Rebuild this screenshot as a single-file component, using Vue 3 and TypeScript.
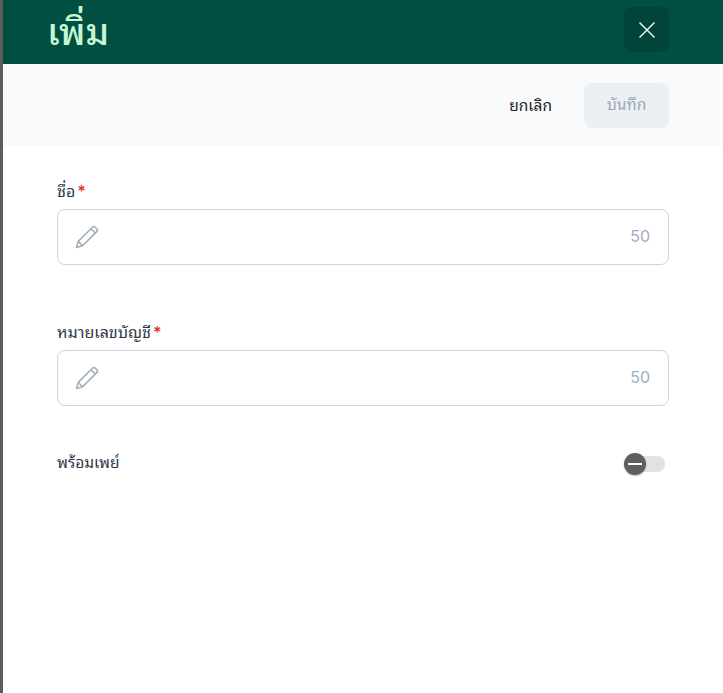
<script setup lang="ts">
import { ref } from 'vue';

interface Field {
  id: string;
  label: string;
  max: number;
}

const fields: Field[] = [
  { id: 'name', label: 'ชื่อ', max: 50 },
  { id: 'account', label: 'หมายเลขบัญชี', max: 50 },
];

const values = ref<Record<string, string>>({ name: '', account: '' });
</script>

<template>
  <div class="page">
    <div class="edge"></div>
    <main class="panel">
      <header class="head">
        <h1>เพิ่ม</h1>
        <button type="button" class="close" aria-label="close">
          <svg width="18" height="18" viewBox="0 0 18 18" fill="none" stroke="#e6f0ed" stroke-width="1.5">
            <path d="M1.5 1.5 16.5 16.5M16.5 1.5 1.5 16.5" />
          </svg>
        </button>
      </header>

      <div class="actions">
        <button type="button" class="cancel">ยกเลิก</button>
        <button type="button" class="save" disabled>บันทึก</button>
      </div>

      <form class="form">
        <div v-for="field in fields" :key="field.id" class="field">
          <label :for="field.id">{{ field.label }}<span class="req">*</span></label>
          <div class="input">
            <svg width="26" height="26" viewBox="0 0 26 26" fill="none" stroke="#a0aec0" stroke-width="1.6" stroke-linejoin="round">
              <path d="M2.5 23.5 4.2 17.4 18.4 3.2a2 2 0 0 1 2.8 0l1.6 1.6a2 2 0 0 1 0 2.8L8.6 21.8Z" />
              <path d="M4.2 17.4 8.6 21.8M17 4.8 21.2 9" />
            </svg>
            <input :id="field.id" v-model="values[field.id]" type="text" :maxlength="field.max" />
            <span class="count">{{ field.max - values[field.id].length }}</span>
          </div>
        </div>

        <div class="switch-row">
          <span class="switch-label">พร้อมเพย์</span>
          <div class="switch">
            <span class="thumb"><i></i></span>
          </div>
        </div>
      </form>
    </main>
  </div>
</template>

<style>
html,
body {
  margin: 0;
  background: #fff;
}
</style>

<style scoped>
.page {
  display: flex;
  min-height: 693px;
  font-family: Inter, "Noto Sans Thai Looped", "Noto Sans", sans-serif;
  color: #2d3748;
}

.edge {
  width: 3px;
  background: #5c5c5c;
}

.panel {
  flex: 1;
  min-width: 0;
}

.head {
  display: flex;
  align-items: center;
  justify-content: space-between;
  height: 64px;
  padding: 0 54px 0 44px;
  box-sizing: border-box;
  background: #004f40;
}

h1 {
  margin: -1px 0 0;
  font-size: 37px;
  font-weight: 500;
  line-height: 64px;
  color: #c6f6d5;
}

.close {
  display: flex;
  align-items: center;
  justify-content: center;
  width: 45px;
  height: 45px;
  margin-top: -5px;
  border: 0;
  border-radius: 8px;
  background: #00443a;
}

.actions {
  display: flex;
  align-items: center;
  justify-content: flex-end;
  gap: 32px;
  height: 82px;
  padding-right: 54px;
  background: #f9fafc;
}

.actions button {
  font: inherit;
  font-size: 15.5px;
  line-height: 22px;
  border: 0;
}

.cancel {
  padding: 2px 0 0;
  background: none;
  color: #1a202c;
}

.save {
  width: 85px;
  height: 45px;
  padding: 0;
  border-radius: 8px;
  background: #edf0f3;
  color: #98a7bb;
}

.form {
  padding: 33px 54px 0;
}

.field {
  margin-bottom: 55px;
}

.field:nth-of-type(2) {
  margin-bottom: 48px;
}

label {
  display: block;
  height: 22px;
  margin-bottom: 8px;
  font-size: 16px;
  line-height: 24px;
}

.req {
  margin-left: 2px;
  font-weight: 600;
  color: #e8343a;
}

.input {
  display: flex;
  align-items: center;
  height: 56px;
  padding: 0 18px 0 16px;
  box-sizing: border-box;
  border: 1px solid #cbd5e0;
  border-radius: 8px;
}

.input input {
  flex: 1;
  min-width: 0;
  border: 0;
  outline: 0;
  background: none;
  font: inherit;
}

.count {
  margin-top: -2px;
  font-size: 16px;
  color: #a0aec0;
}

.switch-row {
  display: flex;
  align-items: center;
  justify-content: space-between;
}

.switch-label {
  margin-top: -5px;
  font-size: 15.5px;
}

.switch {
  position: relative;
  width: 40px;
  height: 16px;
  margin-right: 4px;
  border-radius: 8px;
  background: #e2e2e2;
}

.thumb {
  position: absolute;
  top: -3px;
  left: -1px;
  display: flex;
  align-items: center;
  justify-content: center;
  width: 22px;
  height: 22px;
  border-radius: 50%;
  background: #5f5f5f;
  box-shadow: 0 1px 2px rgb(0 0 0 / 25%);
}

.thumb i {
  width: 14px;
  height: 2px;
  background: #fff;
}
</style>
